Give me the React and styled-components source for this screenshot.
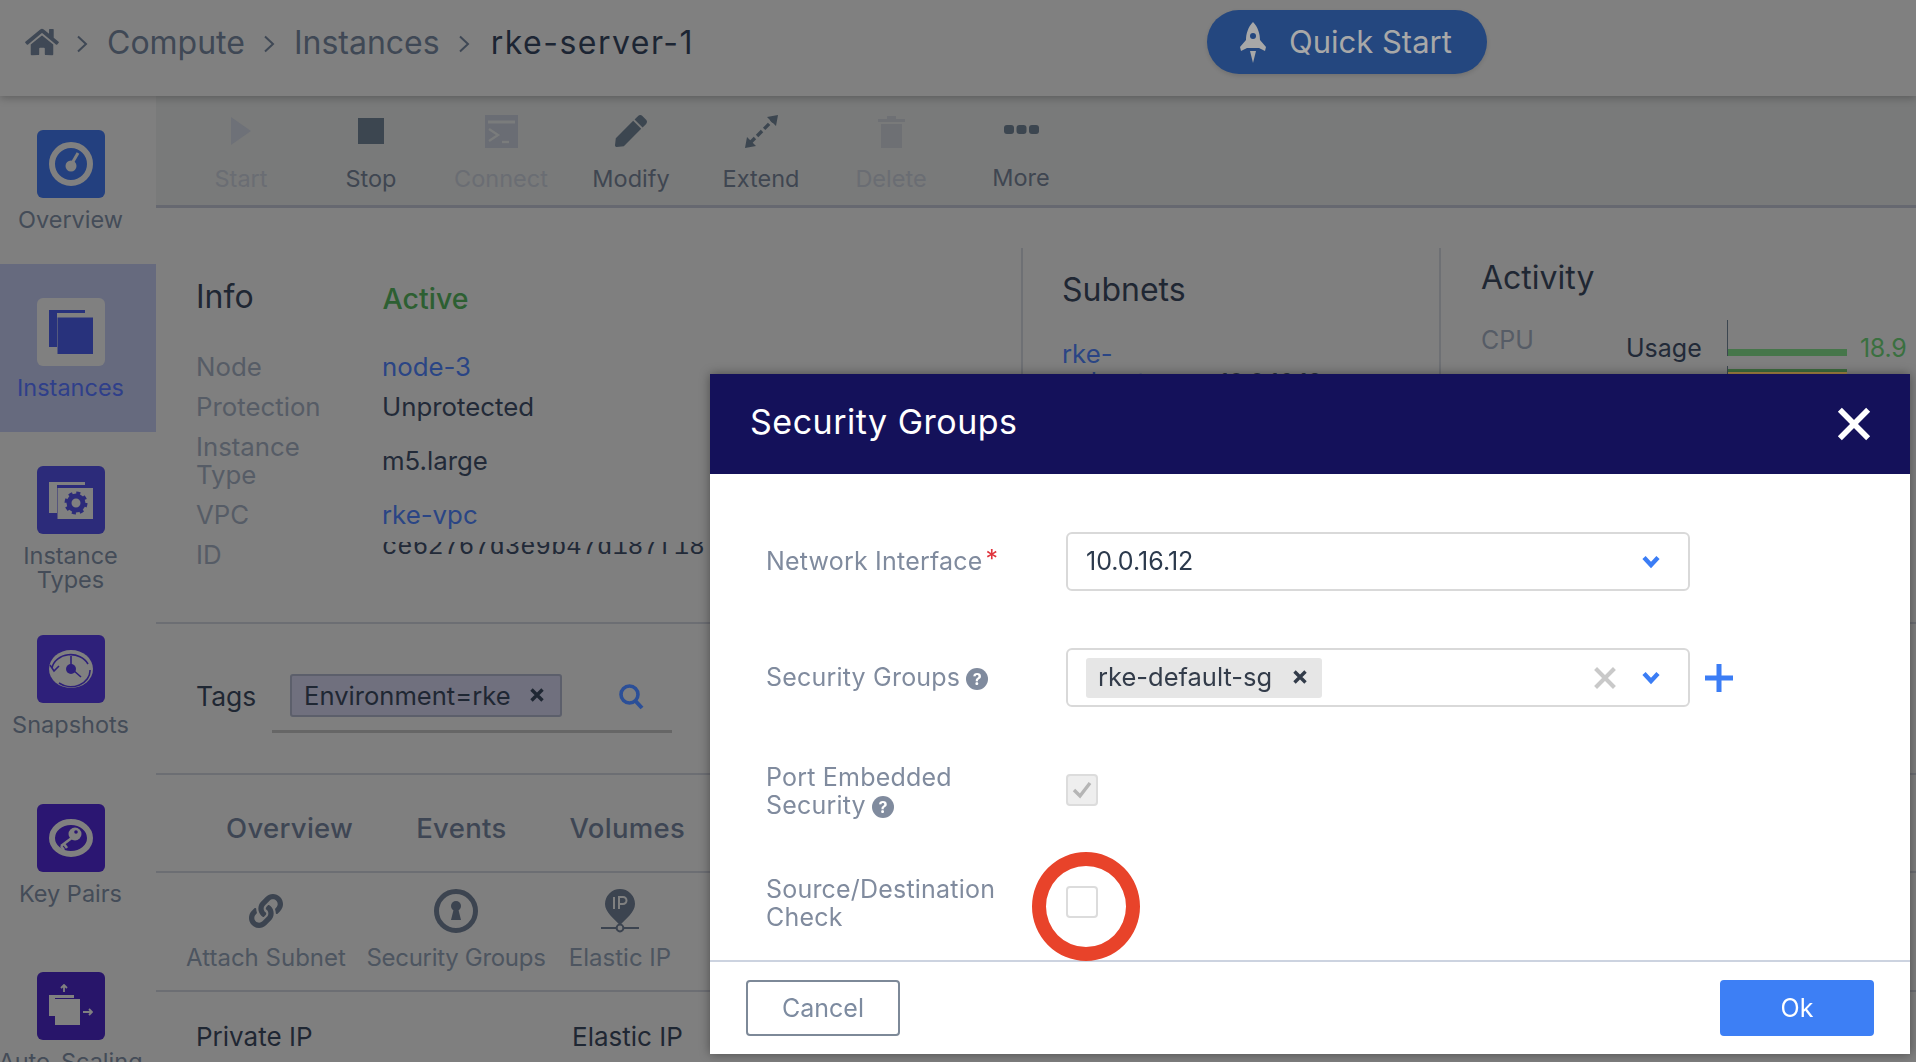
import React from 'react';
import styled, { createGlobalStyle } from 'styled-components';
import { FaHome, FaLink, FaPen } from 'react-icons/fa';

const GlobalStyle = createGlobalStyle`
  html, body {
    margin: 0;
    height: 100%;
    overflow: hidden;
    background: #7f7f7f;
    font-family: Inter, "Noto Sans", "Liberation Sans", sans-serif;
  }
  * { box-sizing: border-box; }
`;

const Page = styled.div`
  width: 1916px;
  height: 1062px;
  overflow: hidden;
  display: flex;
  flex-direction: column;
`;

const Header = styled.header`
  height: 96px;
  flex: none;
  padding: 0 0 0 25px;
  display: flex;
  align-items: center;
  background: #808080;
  box-shadow: 0 2px 8px rgba(0, 0, 0, 0.25);
  position: relative;
  z-index: 2;
`;

const Crumbs = styled.nav`
  width: 1182px;
  margin-top: -12px;
  display: flex;
  align-items: center;
  font-size: 32px;
  color: #3f4855;
`;

const HomeIcon = styled(FaHome)`
  width: 34px;
  height: 30px;
  color: #3f4855;
  margin: 0 17px 0 0;
`;

const Sep = styled.svg`
  width: 12px;
  height: 18px;
  margin: 4px ${(p) => p.$gap || 19}px 0 0;
`;

const Crumb = styled.span`
  margin-right: 18px;
  white-space: nowrap;
  color: ${(p) => (p.$current ? '#1c2533' : '#3f4855')};
  letter-spacing: ${(p) => (p.$current ? '1.5px' : '0')};
`;

const QuickStart = styled.button`
  width: 280px;
  height: 64px;
  margin-top: -12px;
  border: none;
  border-radius: 32px;
  background: #24477f;
  color: #a8a8a8;
  font: inherit;
  font-size: 31px;
  line-height: 60px;
  display: flex;
  align-items: center;
  gap: 23px;
  padding: 0 0 0 33px;
  box-shadow: 0 2px 4px rgba(0, 0, 0, 0.12);
`;

const Body = styled.div`
  flex: 1;
  display: flex;
  min-height: 0;
`;

const Sidebar = styled.aside`
  width: 156px;
  flex: none;
  background: #7f7f7f;
`;

const NavItem = styled.div`
  height: ${(p) => p.$h}px;
  padding: 34px 15px 0 0;
  display: flex;
  flex-direction: column;
  align-items: center;
  background: ${(p) => (p.$active ? '#666a7e' : 'transparent')};
`;

const Tile = styled.div`
  width: 68px;
  height: 68px;
  flex: none;
  border-radius: 6px;
  background: ${(p) => p.$bg};
  display: flex;
  align-items: center;
  justify-content: center;
`;

const NavLabel = styled.div`
  margin-top: 10px;
  text-align: center;
  font-size: 23.5px;
  line-height: 24px;
  white-space: nowrap;
  color: ${(p) => (p.$active ? '#2f3f8a' : '#444c58')};
`;

const Main = styled.main`
  flex: 1;
  min-width: 0;
`;

const Toolbar = styled.div`
  height: 112px;
  padding-left: 20px;
  display: flex;
  background: #797a7a;
  border-bottom: 3px solid #666870;
`;

const Tool = styled.div`
  width: 130px;
  display: flex;
  flex-direction: column;
  align-items: center;
  padding-top: 10px;
  color: ${(p) => (p.$off ? '#6a6d73' : '#3f4651')};
`;

const ToolIcon = styled.div`
  height: 50px;
  display: flex;
  align-items: center;
  justify-content: center;
  margin-bottom: ${(p) => (p.$more ? '9px' : '8px')};
  margin-top: ${(p) => (p.$more ? '-2px' : '0')};
  color: inherit;
  & > svg { display: block; }
`;

const ToolLabel = styled.div`
  font-size: 23.5px;
  line-height: 30px;
`;

const InfoRow = styled.section`
  height: 414px;
  padding-top: 40px;
  display: flex;
`;

const InfoCol = styled.div`
  width: 865px;
  padding: 29px 0 0 40px;
`;

const SubnetCol = styled.div`
  width: 418px;
  padding: 22px 0 0 39px;
  border-left: 2px solid #6e7074;
`;

const ActivityCol = styled.div`
  flex: 1;
  padding: 10px 0 0 40px;
  border-left: 2px solid #6e7074;
`;

const Heading = styled.h3`
  margin: 0;
  font-size: 32px;
  line-height: 40px;
  font-weight: 400;
  color: #1f2733;
`;

const TitleRow = styled.div`
  display: flex;
  align-items: center;
  height: 40px;
  margin-bottom: 30px;
`;

const Active = styled.span`
  margin: 3px 0 0 129px;
  font-size: 28.5px;
  font-weight: 500;
  color: #2d5f32;
`;

const Row = styled.div`
  display: flex;
  align-items: center;
  height: ${(p) => p.$h || 40}px;
`;

const Label = styled.div`
  width: 186px;
  font-size: 25.8px;
  line-height: 28px;
  color: #565c66;
`;

const Value = styled.div`
  margin-top: -2px;
  font-size: 25.8px;
  color: #222a38;
`;

const Link = styled.a`
  margin-top: -2px;
  font-size: 25.8px;
  color: #2a4585;
`;

const ClippedId = styled.div`
  height: 16px;
  width: 327px;
  margin-top: -11px;
  overflow: hidden;
  font-family: "Liberation Mono", monospace;
  font-size: 25.6px;
  line-height: 12px;
  white-space: nowrap;
  color: #222a38;
`;

const SubnetLink = styled(Link)`
  display: block;
  margin-top: 31px;
  line-height: 26px;
`;

const SubnetRow = styled.div`
  display: flex;
  align-items: center;
  height: 26px;
  margin-top: 2px;
  font-size: 24px;
  color: #2a3240;
`;

const SubnetName = styled(Link)`
  width: 157px;
`;

const StatRow = styled.div`
  display: flex;
  height: ${(p) => p.$h}px;
  margin-top: ${(p) => p.$top || 0}px;
`;

const StatName = styled.div`
  width: 145px;
  font-size: 25px;
  line-height: 40px;
  color: #565c66;
`;

const StatKind = styled.div`
  width: 101px;
  padding-top: 8px;
  font-size: 25px;
  line-height: 40px;
  color: #222a38;
`;

const Chart = styled.div`
  width: 120px;
  height: 36px;
  border-left: 1px solid #3c4650;
  display: flex;
  flex-direction: column;
  justify-content: ${(p) => (p.$top ? 'flex-start' : 'flex-end')};
`;

const Bar = styled.div`
  height: ${(p) => p.$h}px;
  margin-top: ${(p) => p.$gap || 0}px;
  background: ${(p) => p.$color};
`;

const StatValue = styled.div`
  margin-left: 13px;
  padding-top: 8px;
  font-size: 25px;
  line-height: 40px;
  letter-spacing: -0.3px;
  color: #3a7040;
`;

const TagsSection = styled.section`
  height: 151px;
  padding: 0 0 0 40px;
  border-top: 2px solid #6c6e73;
  display: flex;
  align-items: center;
`;

const TagsLabel = styled.div`
  width: 76px;
  margin-top: -5px;
  font-size: 26.5px;
  color: #1f2733;
`;

const TagInput = styled.div`
  width: 400px;
  height: 59px;
  margin-top: 9px;
  display: flex;
  align-items: flex-start;
  border-bottom: 3px solid #666;
`;

const Tag = styled.div`
  width: 272px;
  height: 43px;
  margin: 0 0 0 18px;
  padding: 0 16px 0 12px;
  display: flex;
  align-items: center;
  justify-content: space-between;
  background: #70707e;
  border: 2px solid #5c5f6b;
  border-radius: 3px;
  font-size: 25.6px;
  color: #1f2733;
`;

const SearchIcon = styled.svg`
  width: 25px;
  height: 26px;
  margin: 10px 0 0 57px;
`;

const TabsSection = styled.section`
  height: 98px;
  padding: 33px 0 0 70px;
  border-top: 2px solid #6c6e73;
  display: flex;
  gap: 63px;
  font-size: 27.5px;
  line-height: 40px;
  font-weight: 500;
  letter-spacing: 0.3px;
  color: #3e4654;
`;

const Actions = styled.section`
  height: 119px;
  padding: 11px 0 0 10px;
  border-top: 2px solid #6c6e73;
  display: flex;
`;

const Action = styled.div`
  width: ${(p) => p.$w}px;
  display: flex;
  flex-direction: column;
  align-items: center;
`;

const ActionIcon = styled.div`
  height: 54px;
  display: flex;
  align-items: center;
  color: #3c4450;
`;

const ActionLabel = styled.div`
  margin-top: 5px;
  font-size: 24px;
  line-height: 30px;
  white-space: nowrap;
  letter-spacing: ${(p) => (p.$tight ? '-0.3px' : '0')};
  color: #4d5560;
`;

const Columns = styled.section`
  padding: 29px 0 0 40px;
  border-top: 2px solid #6c6e73;
  display: flex;
  font-size: 26px;
  line-height: 32px;
  color: #1f2733;
`;

const ColumnName = styled.div`
  width: 376px;
`;

const Modal = styled.div`
  position: fixed;
  left: 710px;
  top: 374px;
  width: 1200px;
  height: 680px;
  background: #fff;
  display: flex;
  flex-direction: column;
  box-shadow: 0 0 10px rgba(0, 0, 0, 0.4);
  z-index: 5;
`;

const ModalHeader = styled.div`
  height: 100px;
  flex: none;
  padding: 0 38px 0 40px;
  display: flex;
  align-items: center;
  justify-content: space-between;
  background: #14115a;
  color: #fff;
  font-size: 34px;
  letter-spacing: 0.5px;
`;

const ModalTitle = styled.span`
  margin-top: -6px;
`;

const ModalBody = styled.div`
  flex: 1;
  padding: 58px 0 0 56px;
  display: flex;
  flex-direction: column;
`;

const Field = styled.div`
  display: flex;
  align-items: center;
  margin-bottom: ${(p) => p.$mb}px;
`;

const FieldLabel = styled.div`
  width: 300px;
  flex: none;
  margin-top: ${(p) => (p.$lift ? '-2px' : '0')};
  font-size: 25px;
  line-height: 28px;
  letter-spacing: 0.2px;
  color: #808b9e;
`;

const Required = styled.span`
  color: #e0333c;
  margin-left: 3px;
  position: relative;
  top: -2px;
`;

const Help = styled.span`
  display: inline-flex;
  width: 22px;
  height: 22px;
  margin-left: 6px;
  border-radius: 50%;
  background: #808b9e;
  color: #fff;
  font-size: 16px;
  font-weight: 700;
  line-height: 1;
  letter-spacing: 0;
  align-items: center;
  justify-content: center;
  vertical-align: 1px;
`;

const Select = styled.div`
  width: 624px;
  height: 59px;
  padding: 0 28px 0 18px;
  display: flex;
  align-items: center;
  border: 2px solid #d9d9d9;
  border-radius: 6px;
  font-size: 25px;
  color: #2c3a4d;
`;

const SelectValue = styled.span`
  margin: -2px auto 0 0;
`;

const ClearGap = styled.span`
  width: 25px;
`;

const Chip = styled.div`
  height: 40px;
  padding: 0 15px 2px 12px;
  margin-right: auto;
  display: flex;
  align-items: center;
  gap: 21px;
  border-radius: 3px;
  background: #e6e6e6;
  font-size: 25.5px;
  color: #333c4a;
`;

const Plus = styled.svg`
  width: 28px;
  height: 28px;
  margin-left: 15px;
`;

const CheckWrap = styled.div`
  position: relative;
  width: 32px;
  height: 32px;
  margin-top: -2px;
`;

const Checkbox = styled.div`
  width: 32px;
  height: 32px;
  display: flex;
  align-items: center;
  justify-content: center;
  border: 2px solid #dcdcdc;
  border-radius: 4px;
  background: ${(p) => (p.$disabled ? '#eeeeee' : '#fff')};
`;

const RedRing = styled.div`
  position: absolute;
  left: -34px;
  top: -34px;
  width: 108px;
  height: 109px;
  border: 14px solid #e8432a;
  border-radius: 50%;
  z-index: 2;
`;

const ModalFooter = styled.div`
  height: 94px;
  flex: none;
  padding: 18px 36px 0 36px;
  display: flex;
  justify-content: space-between;
  align-items: flex-start;
  border-top: 2px solid #ccd3e0;
`;

const FooterButton = styled.button`
  width: 154px;
  height: 56px;
  border-radius: 4px;
  font: inherit;
  font-size: 25px;
  border: 2px solid ${(p) => (p.$primary ? '#3d7ff5' : '#7d8998')};
  background: ${(p) => (p.$primary ? '#3d7ff5' : '#fff')};
  color: ${(p) => (p.$primary ? '#fff' : '#7d8ba0')};
`;

const Cross = ({ size = 14, color = '#1f2733', width = 3.4 }) => (
  <svg width={size} height={size} viewBox="0 0 14 14">
    <path d="M1.5 1.5 12.5 12.5M12.5 1.5 1.5 12.5" stroke={color} strokeWidth={width} fill="none" />
  </svg>
);

const Chevron = () => (
  <svg width="18" height="14" viewBox="0 0 18 14">
    <path d="M2 2.5 9 10 16 2.5" stroke="#3b7df5" strokeWidth="4.4" fill="none" />
  </svg>
);

const Arrow = ({ gap }) => (
  <Sep viewBox="0 0 12 18" $gap={gap}>
    <path d="M2 1.5 10 9 2 16.5" stroke="#3f4855" strokeWidth="2" fill="none" />
  </Sep>
);

const glyph = '#808080';

const navItems = [
  {
    label: 'Overview', h: 168, bg: '#23407f',
    icon: (
      <svg width="44" height="44" viewBox="0 0 44 44">
        <circle cx="22" cy="22" r="19" fill="none" stroke={glyph} strokeWidth="6" />
        <circle cx="22" cy="24" r="5.5" fill={glyph} />
        <path d="M22 23 29 11" stroke={glyph} strokeWidth="3" />
      </svg>
    ),
  },
  {
    label: 'Instances', h: 168, bg: '#808080', active: true,
    icon: (
      <svg width="44" height="44" viewBox="0 0 44 44">
        <path d="M0 0H36V3H8V37H0Z" fill="#28327c" />
        <rect x="8.5" y="7.5" width="35.5" height="36.5" fill="#28327c" />
      </svg>
    ),
  },
  {
    label: ['Instance', 'Types'], h: 169, bg: '#2c2b7a',
    icon: (
      <svg width="44" height="37" viewBox="0 0 44 37">
        <path d="M0 0H36V3H8V31H0Z" fill={glyph} />
        <rect x="8.5" y="6" width="35.5" height="31" fill={glyph} />
        <circle cx="27" cy="21" r="7" fill="none" stroke="#2c2b7a" strokeWidth="5" />
        <circle cx="27" cy="21" r="10" fill="none" stroke="#2c2b7a" strokeWidth="3" strokeDasharray="4 3.85" />
      </svg>
    ),
  },
  {
    label: 'Snapshots', h: 169, bg: '#2e207a',
    icon: (
      <svg width="44" height="38" viewBox="0 0 44 38">
        <ellipse cx="22" cy="19" rx="22" ry="19" fill={glyph} />
        <path d="M3 18A19 16 0 0 1 39 14M41 20A19 16 0 0 1 10 33" fill="none" stroke="#2e207a" strokeWidth="1.6" />
        <path d="M1 15 5 21 10 16" fill="none" stroke="#2e207a" strokeWidth="1.6" />
        <circle cx="22" cy="19" r="5" fill="#2e207a" />
        <path d="M22 6V19M24 20 32 27" stroke="#2e207a" strokeWidth="1.6" />
      </svg>
    ),
  },
  {
    label: 'Key Pairs', h: 168, bg: '#2b1672',
    icon: (
      <svg width="44" height="38" viewBox="0 0 44 38">
        <ellipse cx="22" cy="19" rx="19" ry="16" fill="none" stroke={glyph} strokeWidth="6" />
        <circle cx="26" cy="15" r="6.5" fill={glyph} />
        <path d="M24 18 12 27M15 25 18 29M12 27 15 31" stroke={glyph} strokeWidth="2.6" fill="none" />
        <circle cx="27" cy="13" r="1.8" fill="#2b1672" />
      </svg>
    ),
  },
  {
    label: 'Auto-Scaling', h: 170, bg: '#28156a',
    icon: (
      <svg width="44" height="44" viewBox="0 0 44 44">
        <path d="M0 11H25V14H6V32H0Z" fill={glyph} />
        <rect x="6" y="15" width="25" height="26" fill={glyph} />
        <path d="M15 8V1M12 4 15 1 18 4M34 28H43M40 25 43 28 40 31" fill="none" stroke={glyph} strokeWidth="1.8" />
      </svg>
    ),
  },
];

const tools = [
  {
    label: 'Start', off: true,
    icon: <svg width="20" height="28" viewBox="0 0 20 28"><path d="M0 0 20 14 0 28Z" fill="#6e7178" /></svg>,
  },
  {
    label: 'Stop',
    icon: <svg width="26" height="26" viewBox="0 0 26 26"><rect width="26" height="26" fill="#3c4650" /></svg>,
  },
  {
    label: 'Connect', off: true,
    icon: (
      <svg width="33" height="33" viewBox="0 0 33 33">
        <path d="M0 0H33V33H0Z" fill="#6a6d74" />
        <path d="M3 7H30" stroke="#7a7c7c" strokeWidth="3" />
        <path d="M4 14 13 20 4 26" stroke="#7a7c7c" strokeWidth="2.4" fill="none" />
        <path d="M17 27H24" stroke="#7a7c7c" strokeWidth="2.4" />
      </svg>
    ),
  },
  { label: 'Modify', icon: <FaPen size={32} color="#3c4650" /> },
  {
    label: 'Extend',
    icon: (
      <svg width="33" height="33" viewBox="0 0 33 33">
        <path d="M33 0 22 2 31 11ZM0 33 11 31 2 22Z" fill="#3c4650" />
        <path d="M5 28 28 5" stroke="#3c4650" strokeWidth="3.4" strokeDasharray="7 3" fill="none" />
      </svg>
    ),
  },
  {
    label: 'Delete', off: true,
    icon: (
      <svg width="27" height="33" viewBox="0 0 27 33">
        <path d="M0 4H9V1H18V4H27V7H0ZM3 9H24V33H3Z" fill="#6e7074" />
      </svg>
    ),
  },
  {
    label: 'More', more: true,
    icon: (
      <svg width="35" height="9" viewBox="0 0 35 9">
        <rect x="0" width="10" height="9" rx="3" fill="#3c4650" />
        <rect x="12.5" width="10" height="9" rx="3" fill="#3c4650" />
        <rect x="25" width="10" height="9" rx="3" fill="#3c4650" />
      </svg>
    ),
  },
];

function App() {
  return (
    <Page>
      <GlobalStyle />
      <Header>
        <Crumbs>
          <HomeIcon />
          <Arrow />
          <Crumb>Compute</Crumb>
          <Arrow />
          <Crumb>Instances</Crumb>
          <Arrow gap={21} />
          <Crumb $current>rke-server-1</Crumb>
        </Crumbs>
        <QuickStart>
          <svg width="26" height="41" viewBox="0 0 26 41">
            <path d="M13 0C18 5 20 12 20 18L26 25 25 29 19 26H7L1 29 0 25 6 18C6 12 8 5 13 0Z" fill="#a8a8a8" />
            <circle cx="13" cy="14" r="3" fill="#24477f" />
            <path d="M10 29H16L13 41Z" fill="#a8a8a8" />
          </svg>
          Quick Start
        </QuickStart>
      </Header>
      <Body>
        <Sidebar>
          {navItems.map((item) => (
            <NavItem key={String(item.label)} $h={item.h} $active={item.active}>
              <Tile $bg={item.bg}>{item.icon}</Tile>
              <NavLabel $active={item.active}>
                {Array.isArray(item.label) ? item.label.map((l) => <div key={l}>{l}</div>) : item.label}
              </NavLabel>
            </NavItem>
          ))}
        </Sidebar>
        <Main>
          <Toolbar>
            {tools.map((t) => (
              <Tool key={t.label} $off={t.off}>
                <ToolIcon $more={t.more}>{t.icon}</ToolIcon>
                <ToolLabel>{t.label}</ToolLabel>
              </Tool>
            ))}
          </Toolbar>
          <InfoRow>
            <InfoCol>
              <TitleRow>
                <Heading>Info</Heading>
                <Active>Active</Active>
              </TitleRow>
              <Row><Label>Node</Label><Link>node-3</Link></Row>
              <Row><Label>Protection</Label><Value>Unprotected</Value></Row>
              <Row $h={68}><Label>Instance<br />Type</Label><Value>m5.large</Value></Row>
              <Row><Label>VPC</Label><Link>rke-vpc</Link></Row>
              <Row><Label>ID</Label><ClippedId>ce62767d3e9b47d187f18</ClippedId></Row>
            </InfoCol>
            <SubnetCol>
              <Heading>Subnets</Heading>
              <SubnetLink>rke-</SubnetLink>
              <SubnetRow>
                <SubnetName>subnet</SubnetName>
                <span>10.0.16.12</span>
              </SubnetRow>
            </SubnetCol>
            <ActivityCol>
              <Heading>Activity</Heading>
              <StatRow $h={46} $top={22}>
                <StatName>CPU</StatName>
                <StatKind>Usage</StatKind>
                <Chart><Bar $h={7} $color="#46764a" /></Chart>
                <StatValue>18.9</StatValue>
              </StatRow>
              <StatRow $h={40}>
                <StatName />
                <StatKind />
                <Chart $top>
                  <Bar $h={3} $gap={3} $color="#3d6b3d" />
                  <Bar $h={4} $color="#a88745" />
                </Chart>
              </StatRow>
            </ActivityCol>
          </InfoRow>
          <TagsSection>
            <TagsLabel>Tags</TagsLabel>
            <TagInput>
              <Tag>
                Environment=rke
                <Cross size={14} />
              </Tag>
              <SearchIcon viewBox="0 0 25 26">
                <circle cx="10.5" cy="10.5" r="8.5" fill="none" stroke="#2b4f98" strokeWidth="3.6" />
                <path d="M16.5 17 23 24" stroke="#2b4f98" strokeWidth="4" />
              </SearchIcon>
            </TagInput>
          </TagsSection>
          <TabsSection>
            <span>Overview</span>
            <span>Events</span>
            <span>Volumes</span>
          </TabsSection>
          <Actions>
            <Action $w={200}>
              <ActionIcon><FaLink size={34} /></ActionIcon>
              <ActionLabel>Attach Subnet</ActionLabel>
            </Action>
            <Action $w={180}>
              <ActionIcon>
                <svg width="44" height="44" viewBox="0 0 44 44">
                  <circle cx="22" cy="22" r="19.5" fill="none" stroke="#3c4450" strokeWidth="5" />
                  <circle cx="22" cy="17" r="5" fill="#3c4450" />
                  <path d="M20 19H24L27 31H17Z" fill="#3c4450" />
                </svg>
              </ActionIcon>
              <ActionLabel $tight>Security Groups</ActionLabel>
            </Action>
            <Action $w={148}>
              <ActionIcon>
                <svg width="38" height="44" viewBox="0 0 38 44">
                  <path d="M19 0A15 15 0 0 1 34 15C34 23 25 30 19 36 13 30 4 23 4 15A15 15 0 0 1 19 0Z" fill="#3c4450" />
                  <path d="M13 8V20M18 20V8H22A3.5 3.5 0 0 1 22 15H18" stroke="#808080" strokeWidth="2" fill="none" />
                  <path d="M0 39H15M23 39H38" stroke="#3c4450" strokeWidth="2" />
                  <circle cx="19" cy="39" r="3.4" fill="none" stroke="#3c4450" strokeWidth="2" />
                </svg>
              </ActionIcon>
              <ActionLabel>Elastic IP</ActionLabel>
            </Action>
          </Actions>
          <Columns>
            <ColumnName>Private IP</ColumnName>
            <ColumnName>Elastic IP</ColumnName>
          </Columns>
        </Main>
      </Body>

      <Modal>
        <ModalHeader>
          <ModalTitle>Security Groups</ModalTitle>
          <Cross size={36} color="#fff" width={2.2} />
        </ModalHeader>
        <ModalBody>
          <Field $mb={57}>
            <FieldLabel $lift>Network Interface<Required>*</Required></FieldLabel>
            <Select>
              <SelectValue>10.0.16.12</SelectValue>
              <Chevron />
            </Select>
          </Field>
          <Field $mb={56}>
            <FieldLabel $lift>Security Groups<Help>?</Help></FieldLabel>
            <Select>
              <Chip>rke-default-sg<Cross size={14} color="#333c4a" /></Chip>
              <Cross size={24} color="#c9c9c9" width={2.4} />
              <ClearGap />
              <Chevron />
            </Select>
            <Plus viewBox="0 0 28 28">
              <path d="M14 0V28M0 14H28" stroke="#3b7df5" strokeWidth="5" />
            </Plus>
          </Field>
          <Field $mb={56}>
            <FieldLabel>Port Embedded<br />Security<Help>?</Help></FieldLabel>
            <CheckWrap>
              <Checkbox $disabled>
                <svg width="20" height="18" viewBox="0 0 20 18">
                  <path d="M2 9 8 15 18 2" stroke="#b5b5b5" strokeWidth="3.4" fill="none" />
                </svg>
              </Checkbox>
            </CheckWrap>
          </Field>
          <Field $mb={0}>
            <FieldLabel>Source/Destination<br />Check</FieldLabel>
            <CheckWrap>
              <Checkbox />
              <RedRing />
            </CheckWrap>
          </Field>
        </ModalBody>
        <ModalFooter>
          <FooterButton>Cancel</FooterButton>
          <FooterButton $primary>Ok</FooterButton>
        </ModalFooter>
      </Modal>
    </Page>
  );
}

export default App;
